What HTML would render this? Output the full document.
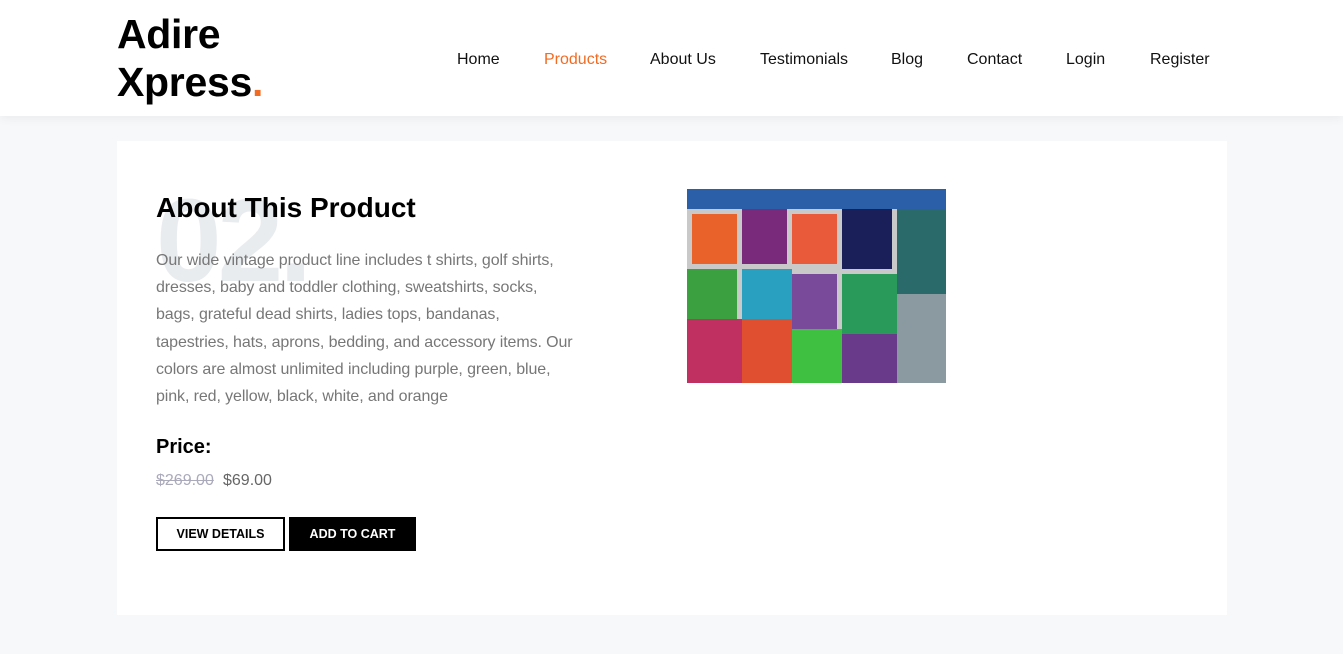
<!DOCTYPE html>
<html><head><style>
*{margin:0;padding:0;box-sizing:border-box}
body{width:1343px;height:654px;background:#f7f8fa;font-family:"Liberation Sans",sans-serif;position:relative;overflow:hidden}
.hdr{position:absolute;left:0;top:0;width:1343px;height:116px;background:#fff;box-shadow:0 2px 10px rgba(0,0,0,.06)}
.logo{position:absolute;left:117px;top:10px;font-size:41px;font-weight:bold;line-height:48px;color:#000;letter-spacing:-0.3px}
.logo span{color:#f26b22}
.nav a{position:absolute;top:51px;font-size:16px;color:#111;text-decoration:none;white-space:nowrap}
.card{position:absolute;left:117px;top:141px;width:1110px;height:474px;background:#fff}
.big{position:absolute;left:156px;top:176px;font-size:118px;font-weight:bold;color:#e9ecef;line-height:130px;letter-spacing:-4px}
h1{position:absolute;left:156px;top:192px;font-size:28px;font-weight:bold;color:#000;white-space:nowrap}
p{position:absolute;left:156px;top:247px;font-size:16px;line-height:27.2px;color:#777;white-space:nowrap;letter-spacing:-0.1px}
h3{position:absolute;left:156px;top:436px;font-size:20px;font-weight:bold;color:#000}
.old{position:absolute;left:156px;top:472px;font-size:16px;color:#aab;text-decoration:line-through}
.new{position:absolute;left:223px;top:472px;font-size:16px;color:#666}
.btn{position:absolute;top:517px;height:34px;font-size:12.5px;font-weight:bold;display:flex;align-items:center;justify-content:center}
.img{position:absolute;left:687px;top:189px;width:259px;height:194px;overflow:hidden;background:#5a6a8a}
</style></head><body>
<div class="hdr">
<div class="logo">Adire<br>Xpress<span>.</span></div>
<div class="nav">
<a style="left:457px">Home</a>
<a style="left:544px;color:#f26b22">Products</a>
<a style="left:650px">About Us</a>
<a style="left:760px">Testimonials</a>
<a style="left:891px">Blog</a>
<a style="left:967px">Contact</a>
<a style="left:1066px">Login</a>
<a style="left:1150px">Register</a>
</div></div>
<div class="card"></div>
<div class="big">02.</div>
<h1>About This Product</h1>
<p>Our wide vintage product line includes t shirts, golf shirts,<br>dresses, baby and toddler clothing, sweatshirts, socks,<br>bags, grateful dead shirts, ladies tops, bandanas,<br>tapestries, hats, aprons, bedding, and accessory items. Our<br>colors are almost unlimited including purple, green, blue,<br>pink, red, yellow, black, white, and orange</p>
<h3>Price:</h3>
<div class="old">$269.00</div><div class="new">$69.00</div>
<div class="btn" style="left:156px;width:129px;border:2px solid #000;color:#000;background:#fff">VIEW DETAILS</div>
<div class="btn" style="left:289px;width:127px;background:#000;color:#fff">ADD TO CART</div>
<div class="img">
<svg width="259" height="194">
<rect width="259" height="20" fill="#2b5fa8"/>
<rect y="20" width="259" height="174" fill="#c9c9c9"/>
<rect x="5" y="25" width="45" height="50" fill="#e8622a"/>
<rect x="55" y="20" width="45" height="55" fill="#7a2a7a"/>
<rect x="105" y="25" width="45" height="50" fill="#e85a3a"/>
<rect x="155" y="20" width="50" height="60" fill="#1a1f5a"/>
<rect x="210" y="20" width="49" height="85" fill="#2a6a6a"/>
<rect x="0" y="80" width="50" height="50" fill="#3aa040"/>
<rect x="55" y="80" width="50" height="50" fill="#2aa0c0"/>
<rect x="105" y="85" width="45" height="55" fill="#7a4a9a"/>
<rect x="155" y="85" width="55" height="60" fill="#2a9a5a"/>
<rect x="210" y="105" width="49" height="89" fill="#8a9aa0"/>
<rect x="0" y="130" width="55" height="64" fill="#c03060"/>
<rect x="55" y="130" width="50" height="64" fill="#e05030"/>
<rect x="105" y="140" width="50" height="54" fill="#40c040"/>
<rect x="155" y="145" width="55" height="49" fill="#6a3a8a"/>
</svg></div>
</body></html>
